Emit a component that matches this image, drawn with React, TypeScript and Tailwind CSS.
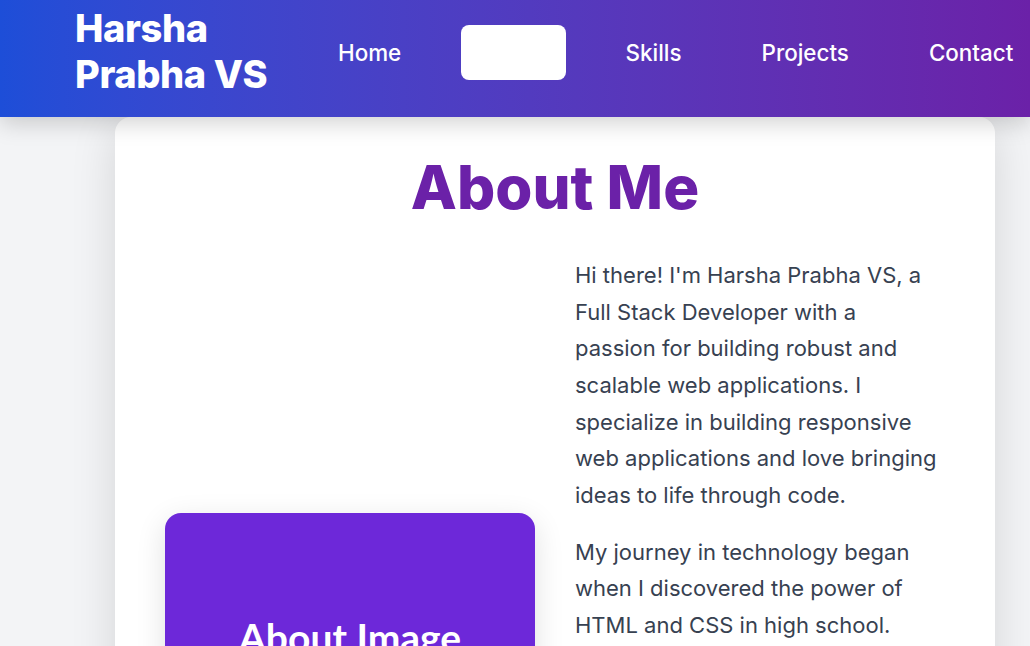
import React from 'react';

const links = ['Home', 'About', 'Skills', 'Projects', 'Contact'];

export default function App() {
  const active = 'About';

  return (
    <div className="h-screen overflow-hidden bg-gray-100" style={{ fontFamily: 'Inter, "Noto Sans", sans-serif' }}>
      <header className="relative z-10 flex h-[117px] items-center bg-gradient-to-r from-[#1d4ed8] to-[#6b21a8] pb-[13px] pl-[75px] shadow-[0_6px_22px_rgba(0,0,0,0.18)]">
        <div className="w-[200px] shrink-0 text-[38px] font-extrabold leading-[1.2] tracking-[-0.01em] text-white">Harsha Prabha VS</div>
        <nav className="ml-[43px] flex items-center gap-[40px]">
          {links.map((l) => (
            <a
              key={l}
              href="#"
              className={
                l === active
                  ? 'shrink-0 rounded-lg bg-white px-[20px] py-[12px] text-[22.4px] font-medium leading-[31px] text-white'
                  : 'shrink-0 px-[20px] py-[12px] text-[22.4px] font-medium leading-[31px] text-white'
              }
            >
              {l}
            </a>
          ))}
        </nav>
      </header>

      <main className="pl-[115px]">
        <section className="w-[880px] rounded-2xl bg-white px-[50px] pt-[40px] pb-16 shadow-[0_10px_45px_rgba(0,0,0,0.13)]">
          <h2 className="mb-[40px] text-center text-[60px] font-extrabold leading-none tracking-normal text-[#6b21a8]">About Me</h2>
          <div className="grid grid-cols-[370px_368px] items-center gap-10">
            <div className="flex h-[250px] items-center justify-center rounded-2xl bg-[#6d28d9] shadow-[0_8px_30px_rgba(0,0,0,0.12)]">
              <span className="text-[39px] font-bold text-white" style={{ fontFamily: 'Lato, sans-serif' }}>About Image</span>
            </div>
            <div className="text-[22px] leading-[36.67px] text-[#374151]">
              <p className="mb-5">
                Hi there! I'm Harsha Prabha VS, a Full Stack Developer with a passion for building robust and scalable web applications. I specialize in building responsive web applications and love bringing ideas to life through code.
              </p>
              <p className="mb-2">
                My journey in technology began when I discovered the power of HTML and CSS in high school. Since then, I have grown into a developer who enjoys every part of the stack.
              </p>
              <p>
                When I'm not coding, I enjoy exploring new tools, contributing to open source projects and learning something new every day. I believe in writing clean, maintainable code and building products that people love to use.
              </p>
            </div>
          </div>
        </section>
      </main>
    </div>
  );
}
